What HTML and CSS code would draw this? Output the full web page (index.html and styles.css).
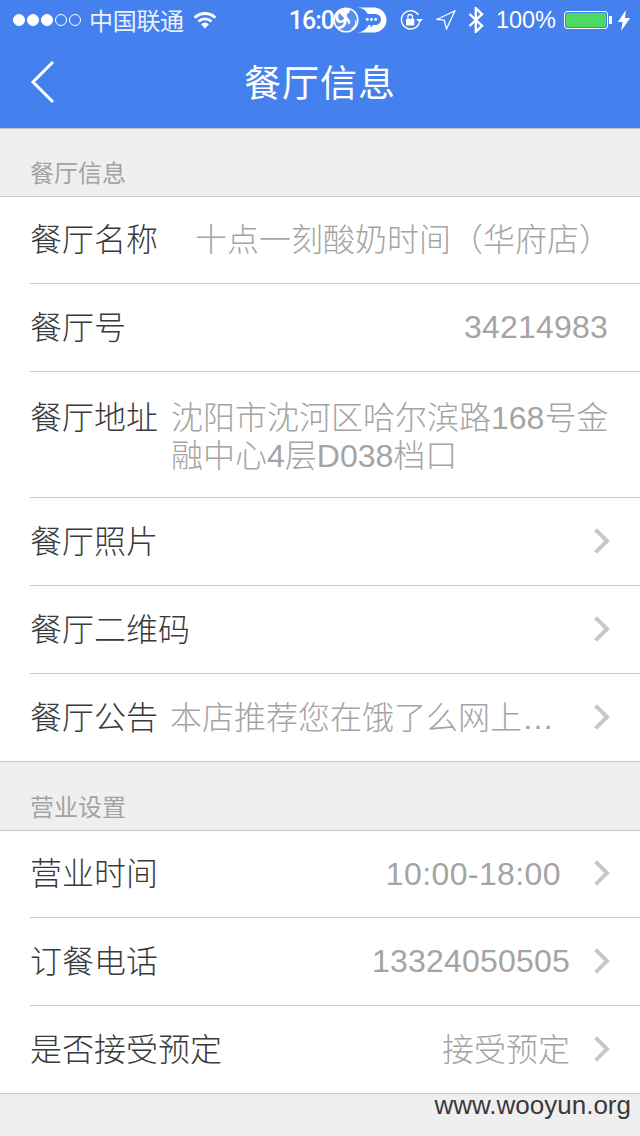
FILE: index.html
```html
<!DOCTYPE html>
<html lang="zh-CN">
<head>
  <meta charset="UTF-8">
  <title>餐厅信息</title>
  <link rel="stylesheet" href="styles.css">
</head>
<body>
  <div class="header">
    <div class="statusbar">
      <div class="signal">
        <i class="dot on"></i><i class="dot on"></i><i class="dot on"></i><i class="dot"></i><i class="dot"></i>
      </div>
      <span class="carrier">中国联通</span>
      <svg class="wifi" width="24" height="18" viewBox="0 0 26 20">
        <path d="M1.5 7.500a16.500 16.500 0 0 1 23 0" fill="none" stroke="#fff" stroke-width="3.200"/>
        <path d="M5.800 11.600a10.400 10.400 0 0 1 14.400 0" fill="none" stroke="#fff" stroke-width="3.200"/>
        <path d="M13 19.500l-4.400-4.800a6.200 6.200 0 0 1 8.800 0z" fill="#fff"/>
      </svg>
      <span class="time">16:09</span>
      <div class="status-right">
        <svg width="24" height="22" viewBox="0 0 26 24">
          <path d="M20 6.500A10 10 0 1 0 21 15" fill="none" stroke="#fff" stroke-width="1.500"/>
          <path d="M17.500 11h7.500l-3.700 4z" fill="#fff"/>
          <rect x="6.500" y="10.500" width="9" height="7.500" rx="1" fill="#fff"/>
          <path d="M8.500 10.500V8.500a2.500 2.500 0 0 1 5 0v2" fill="none" stroke="#fff" stroke-width="1.400"/>
        </svg>
        <svg class="gps" width="20" height="20" viewBox="0 0 20 20">
          <path d="M.800 9.500 18.800 1 10.500 19 8.200 10.200z" fill="none" stroke="#fff" stroke-width="1.300"/>
        </svg>
        <svg class="bt" width="16" height="26" viewBox="0 0 16 26">
          <path d="M1.500 7 14 18.800 7.800 24.800V1.200L14 7.200 1.500 19" fill="none" stroke="#fff" stroke-width="2.400"/>
        </svg>
        <span class="battery-text">100%</span>
        <div class="battery"><div class="battery-fill"></div></div>
        <i class="battery-tip"></i>
        <svg class="bolt" width="14" height="21" viewBox="0 0 13 22">
          <path d="M8.500 0 0 12.500h5L3.500 22 13 8.500H7.500z" fill="#fff"/>
        </svg>
      </div>
    </div>
    <div class="titlebar">
      <svg class="back" width="26" height="44" viewBox="0 0 26 44">
        <path d="M23 2 3 22l20 20" fill="none" stroke="#fff" stroke-width="3"/>
      </svg>
      <h1>餐厅信息</h1>
    </div>
  </div>

  <!-- 悬浮的聊天图标，盖在时间上面 -->
  <div class="float-chat">
    <svg width="54" height="26" viewBox="0 0 54 26">
      <path d="M24 .500h17a12.500 12.500 0 0 1 0 25H24a12.500 12.500 0 0 0 0-25z" fill="#fff"/>
      <circle cx="13" cy="13" r="11.800" fill="#fff" fill-opacity=".12" stroke="#fff" stroke-width="1.600"/>
      <path d="M6 5a11 11 0 0 1 9-3.500c3 .5 2 3 1 4-1.500 1.500-3 1.500-2.500 3.500.5 2 4 3 3.500 6.500-.2 1.500-1 2-1.500 2-.5-3-2-5-4-6.500C9.500 9.500 7.500 8 6 5z" fill="#fff"/>
      <path d="M22 13.500a7 7 0 0 1-4 8l2 1a12 12 0 0 0 3.500-9z" fill="#fff"/>
      <path d="M34 7h8.500a5.500 5.500 0 0 1 0 11h-2.500l-2.500 2.800V18H34a5.500 5.500 0 0 1 0-11z" fill="#4480ee"/>
      <circle cx="34.300" cy="12.500" r="1.400" fill="#fff"/><circle cx="38.500" cy="12.500" r="1.400" fill="#fff"/><circle cx="42.700" cy="12.500" r="1.400" fill="#fff"/>
    </svg>
  </div>

  <div class="section-title">餐厅信息</div>
  <div class="group">
    <div class="row">
      <span class="label">餐厅名称</span>
      <span class="value value-name">十点一刻酸奶时间（华府店）</span>
    </div>
    <div class="row">
      <span class="label">餐厅号</span>
      <span class="value value-right digits value-id">34214983</span>
    </div>
    <div class="row row-tall">
      <span class="label">餐厅地址</span>
      <span class="value value-address">沈阳市沈河区哈尔滨路168号金融中心4层D038档口</span>
    </div>
    <div class="row">
      <span class="label">餐厅照片</span>
      <span class="arrow"></span>
    </div>
    <div class="row">
      <span class="label">餐厅二维码</span>
      <span class="arrow"></span>
    </div>
    <div class="row">
      <span class="label">餐厅公告</span>
      <span class="value value-notice">本店推荐您在饿了么网上…</span>
      <span class="arrow"></span>
    </div>
  </div>

  <div class="section-title">营业设置</div>
  <div class="group">
    <div class="row">
      <span class="label">营业时间</span>
      <span class="value value-right digits value-time">10:00-18:00</span>
      <span class="arrow"></span>
    </div>
    <div class="row">
      <span class="label">订餐电话</span>
      <span class="value value-right digits">13324050505</span>
      <span class="arrow"></span>
    </div>
    <div class="row">
      <span class="label">是否接受预定</span>
      <span class="value value-right">接受预定</span>
      <span class="arrow"></span>
    </div>
  </div>

  <div class="watermark">www.wooyun.org</div>
</body>
</html>
```

FILE: styles.css
```css
body {
  margin: 0;
  height: 1136px;
  overflow: hidden;
  background: #efefef;
  font-family: "Liberation Sans", "Noto Sans CJK SC", sans-serif;
  color: #333;
  position: relative;
}

/* Header */
.header {
  height: 128px;
  background: #4480ee;
  color: #fff;
  box-shadow: 0 1px 0 #c4c4c4;
  position: relative;
}

.statusbar {
  height: 40px;
  display: flex;
  align-items: center;
  padding: 0 9px 0 13px;
}

.signal {
  display: flex;
  gap: 2px;
}

.dot {
  width: 12px;
  height: 12px;
  box-sizing: border-box;
  border-radius: 50%;
  border: 1px solid #fff;
}

.dot.on {
  background: #fff;
}

.carrier {
  font-size: 24px;
  letter-spacing: -.3px;
  margin: 0 0 2px 8px;
  color: #eaf1fd;
}

.wifi {
  margin-left: 9px;
}

.time {
  margin-left: 72px;
  font-size: 25px;
  letter-spacing: -1px;
  font-family: Roboto, "Liberation Sans", sans-serif;
  font-weight: 500;
}

.status-right {
  margin-left: auto;
  display: flex;
  align-items: center;
}

.gps {
  margin-left: 12px;
}

.bt {
  margin-left: 12px;
}

.battery-text {
  margin-left: 12px;
  font-size: 23.500px;
}

.battery {
  margin-left: 8px;
  width: 40px;
  height: 14px;
  padding: 1px;
  border: 1px solid #fff;
  border-radius: 3px;
}

.battery-fill {
  height: 100%;
  background: #4cd964;
  border-radius: 2px;
}

.battery-tip {
  width: 3px;
  height: 8px;
  margin-left: 1px;
  background: #fff;
}

.bolt {
  margin-left: 5px;
}

.titlebar {
  height: 88px;
  display: flex;
  align-items: center;
  justify-content: center;
  position: relative;
}

.back {
  position: absolute;
  left: 30px;
  top: 20px;
}

.titlebar h1 {
  margin: 0 0 6px;
  font-size: 37px;
  font-weight: normal;
  letter-spacing: 1px;
}

.float-chat {
  position: absolute;
  left: 333px;
  top: 7px;
  height: 26px;
}

/* Groups */
.section-title {
  height: 68px;
  box-sizing: border-box;
  padding: 29px 0 0 30px;
  font-size: 24px;
  line-height: 34px;
  color: #a3a3a3;
}

.group {
  background: #fff;
  border-top: 1px solid #c8c8c8;
  border-bottom: 1px solid #c8c8c8;
  padding-left: 30px;
}

.row {
  height: 88px;
  box-sizing: border-box;
  display: flex;
  align-items: center;
  padding-right: 30px;
  padding-bottom: 6px;
  border-bottom: 1px solid #c8c8c8;
}

.row:first-child {
  height: 87px;
}

.row:last-child {
  height: 87px;
  border-bottom: none;
}

.row-tall {
  height: 126px;
  padding-bottom: 0;
  align-items: flex-start;
}

.label {
  font-size: 32px;
  font-weight: 300;
  white-space: nowrap;
  color: #3a3a3a;
}

.value {
  font-size: 32px;
  font-weight: 300;
  color: #a4a4a4;
  white-space: nowrap;
}

.digits {
  margin-top: 6px;
  letter-spacing: .2px;
}

.value-name {
  margin-left: 37px;
}

.value-right {
  margin-left: auto;
}

.value-id {
  margin-right: 2px;
}

.value-time {
  margin-right: 9px;
  letter-spacing: .4px;
}

.row-tall .label {
  margin-top: 20px;
}

.value-address {
  margin: 27px 0 0 13px;
  width: 440px;
  white-space: normal;
  line-height: 38px;
}

.value-notice {
  margin-left: 12px;
}

.arrow {
  width: 14px;
  height: 14px;
  margin-top: 4px;
  margin-left: auto;
  border-top: 4px solid #c8c8c8;
  border-right: 4px solid #c8c8c8;
  transform: rotate(45deg);
  flex-shrink: 0;
  position: relative;
  left: -4px;
}

.value + .arrow {
  margin-left: 22px;
}

.value-notice + .arrow {
  margin-left: auto;
}

.watermark {
  position: absolute;
  right: 9px;
  bottom: 15px;
  font-size: 26px;
  color: #3a3a3a;
}
```
